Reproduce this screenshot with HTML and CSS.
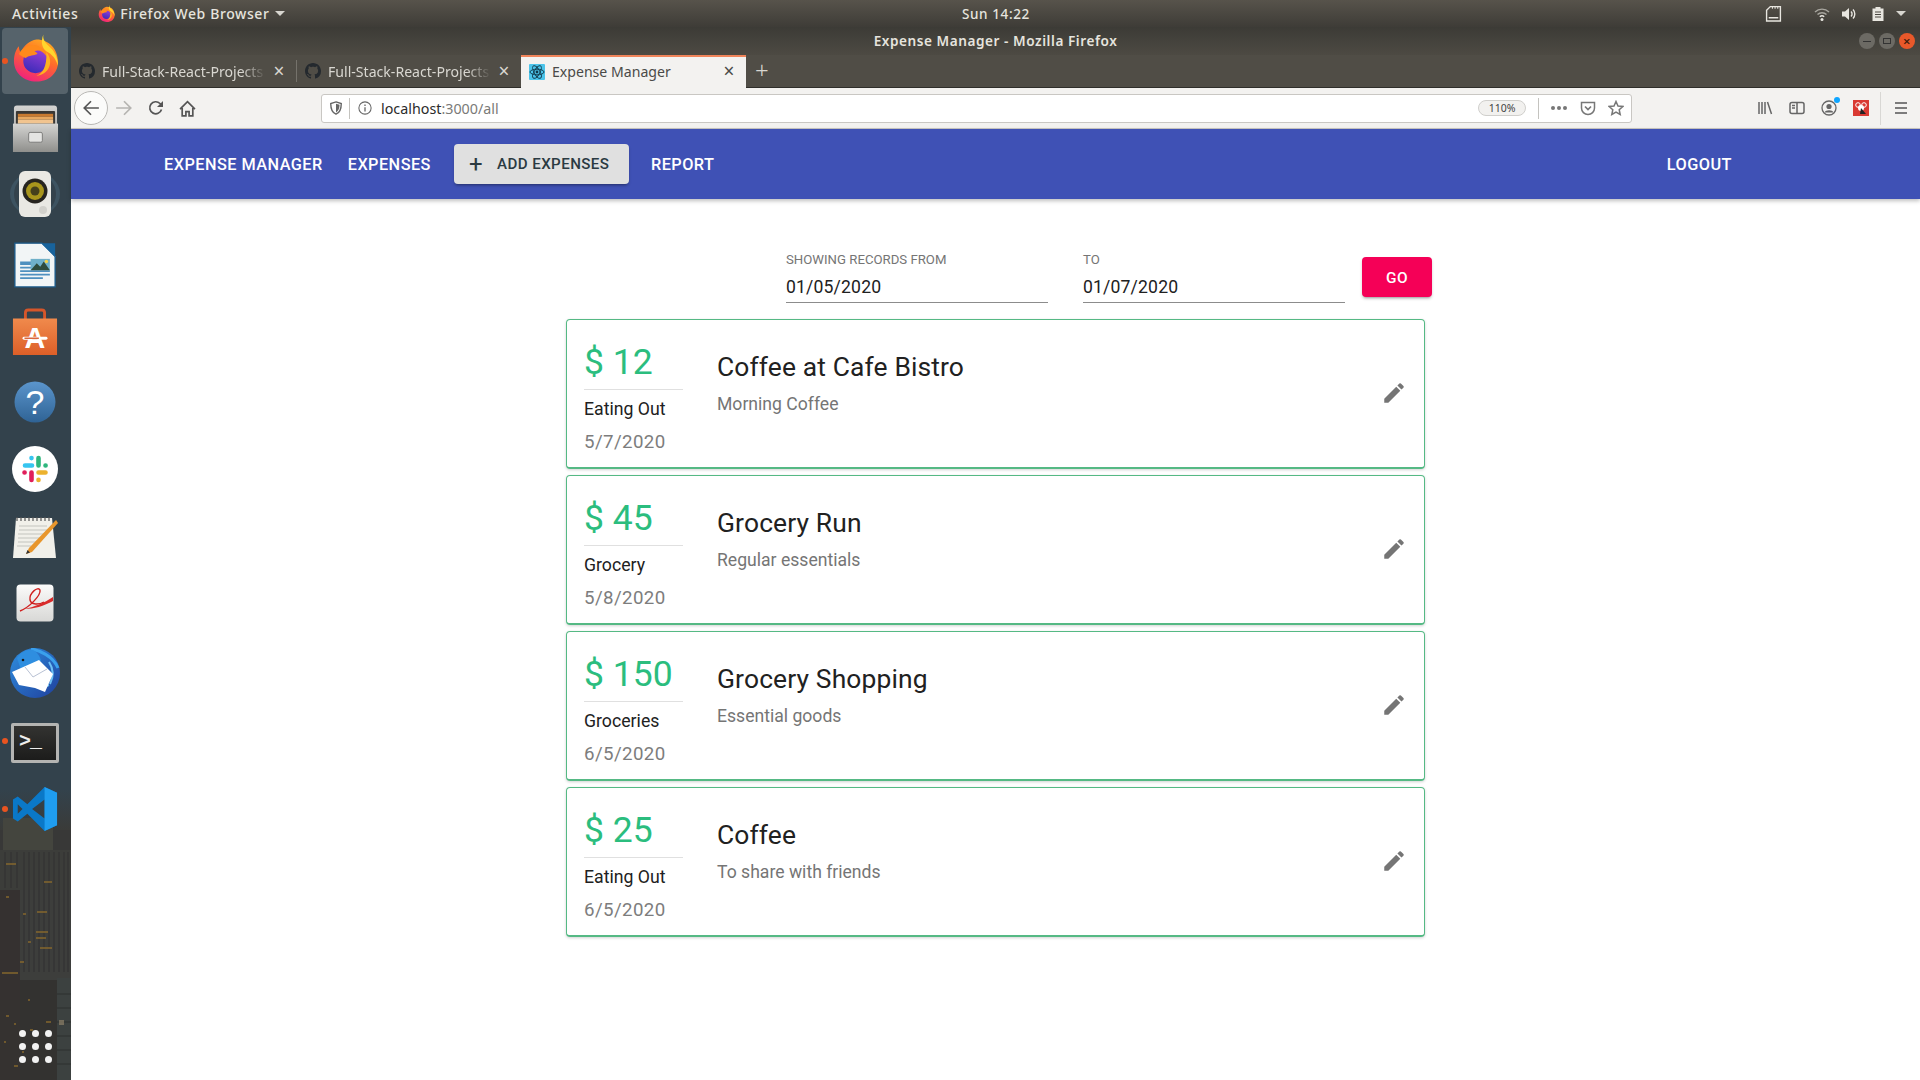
FILE: index.html
```html
<!DOCTYPE html>
<html lang="en">
<head>
    <meta charset="UTF-8">
    <title>Expense Manager - Mozilla Firefox</title>
    <link rel="stylesheet" href="styles.css">
</head>
<body>
<svg class="defs" width="0" height="0">
    <defs>
        <linearGradient id="foxBody" x1="0.8" y1="0" x2="0.3" y2="1">
            <stop offset="0" stop-color="#ffb01f"/><stop offset="0.45" stop-color="#ff6a2b"/><stop offset="1" stop-color="#f0207f"/>
        </linearGradient>
        <linearGradient id="foxGlobe" x1="0.7" y1="0" x2="0.3" y2="1">
            <stop offset="0" stop-color="#9a3fd8"/><stop offset="1" stop-color="#3b2bb8"/>
        </linearGradient>
        <linearGradient id="metal" x1="0" y1="0" x2="0" y2="1">
            <stop offset="0" stop-color="#d4d4d2"/><stop offset="1" stop-color="#8f8f8c"/>
        </linearGradient>
        <linearGradient id="shop" x1="0" y1="0" x2="0" y2="1">
            <stop offset="0" stop-color="#f08a4c"/><stop offset="1" stop-color="#dd5f28"/>
        </linearGradient>
        <linearGradient id="helpBall" x1="0" y1="0" x2="0" y2="1">
            <stop offset="0" stop-color="#5b95cc"/><stop offset="1" stop-color="#2f6395"/>
        </linearGradient>
        <linearGradient id="birdBlue" x1="0" y1="0" x2="1" y2="1">
            <stop offset="0" stop-color="#2f8fe0"/><stop offset="1" stop-color="#1f3f9c"/>
        </linearGradient>
        <linearGradient id="paper" x1="0" y1="0" x2="0" y2="1">
            <stop offset="0" stop-color="#fbfbfa"/><stop offset="1" stop-color="#d8d8d6"/>
        </linearGradient>
        <linearGradient id="cityFade" x1="0" y1="0" x2="0" y2="1">
            <stop offset="0" stop-color="#33424c"/><stop offset="1" stop-color="#3a3b39"/>
        </linearGradient>
        <symbol id="firefox" viewBox="0 0 48 48">
            <path d="M25 5C38 5 47 15 47 28C47 40 37 48 25 48C12 48 2 39 2 27C2 21 4 15 7 12C7 15 8 17 9 18C12 11 18 6 25 5Z" fill="url(#foxBody)"/>
            <path d="M32 0C31 7 36 10 41 15C46 21 47 27 47 32C45 25 41 20 35 17C31 14 29 8 32 0Z" fill="#ffd52e"/>
            <circle cx="24" cy="27" r="12.5" fill="url(#foxGlobe)"/>
            <path d="M7 20C11 13 17 10 24 11C30 12 35 17 35 22C32 17 27 15 23 17C25 18 26 19 26 20C22 22 18 21 14 24C11 23 9 22 7 20Z" fill="#ff8a1c"/>
            <path d="M35 18C39 22 40 28 38 33C36 39 30 42 25 42C31 40 36 33 35 18Z" fill="#ffb21f"/>
        </symbol>
        <symbol id="octocat" viewBox="0 0 16 16">
            <path d="M8 0C3.58 0 0 3.58 0 8c0 3.54 2.29 6.53 5.47 7.59.4.07.55-.17.55-.38 0-.19-.01-.82-.01-1.49-2.01.37-2.53-.49-2.69-.94-.09-.23-.48-.94-.82-1.13-.28-.15-.68-.52-.01-.53.63-.01 1.08.58 1.23.82.72 1.21 1.87.87 2.33.66.07-.52.28-.87.51-1.07-1.78-.2-3.64-.89-3.64-3.95 0-.87.31-1.59.82-2.15-.08-.2-.36-1.02.08-2.12 0 0 .67-.21 2.2.82.64-.18 1.32-.27 2-.27.68 0 1.36.09 2 .27 1.53-1.04 2.2-.82 2.2-.82.44 1.1.16 1.92.08 2.12.51.56.82 1.27.82 2.15 0 3.07-1.87 3.75-3.65 3.95.29.25.54.73.54 1.48 0 1.07-.01 1.93-.01 2.2 0 .21.15.46.55.38A8.013 8.013 0 0016 8c0-4.42-3.58-8-8-8z" fill="#24292e"/>
        </symbol>
        <symbol id="pencil" viewBox="0 0 24 24">
            <path d="M3 17.25V21h3.75L17.81 9.94l-3.75-3.75L3 17.25zM20.71 7.04a1 1 0 0 0 0-1.41l-2.34-2.34a1 1 0 0 0-1.41 0l-1.83 1.83 3.75 3.75 1.83-1.83z"/>
        </symbol>
    </defs>
</svg>

<div class="desktop">
    <header class="panel">
        <span class="panel-activities">Activities</span>
        <span class="panel-app">
            <svg class="panel-fox"><use href="#firefox"/></svg>
            Firefox Web Browser
            <span class="caret"></span>
        </span>
        <span class="panel-clock">Sun 14:22</span>
        <span class="panel-tray">
            <svg class="tray-sd" viewBox="0 0 16 16" width="17" height="17"><path d="M1.5 15V5L5 1.5h9.5V15ZM3.5 12h9" fill="none" stroke="#e8e6e0" stroke-width="1.3"/><path d="M7 1.5v2M9.5 1.5v2M12 1.5v2" stroke="#e8e6e0"/></svg>
            <svg class="tray-wifi" viewBox="0 0 16 16" width="16" height="16"><path d="M1 6a10 10 0 0 1 14 0M3.5 8.5a6.5 6.5 0 0 1 9 0" fill="none" stroke="#a8a69f" stroke-width="1.4"/><path d="M5.8 10.7a3.2 3.2 0 0 1 4.4 0" fill="none" stroke="#e8e6e0" stroke-width="1.4"/><circle cx="8" cy="13.5" r="1.5" fill="#e8e6e0"/></svg>
            <svg class="tray-vol" viewBox="0 0 16 16" width="16" height="16"><path d="M1 5.5h3L8 2v12L4 10.5H1Z" fill="#e8e6e0"/><path d="M10 5.5a3.5 3.5 0 0 1 0 5M12 3.5a6.5 6.5 0 0 1 0 9" fill="none" stroke="#e8e6e0" stroke-width="1.4"/></svg>
            <svg class="tray-bat" viewBox="0 0 16 16" width="16" height="16"><path d="M2.5 2.5h3V1h5v1.5h3V15h-11Z" fill="#e8e6e0"/><path d="M5 6h6M5 8.5h6M5 11h6" stroke="#4a4741" stroke-width="1"/></svg>
            <span class="caret caret-tray"></span>
        </span>
    </header>

    <div class="workspace">
        <aside class="dock">
            <svg class="dock-city" viewBox="0 0 71 290" preserveAspectRatio="none">
                <rect x="0" y="0" width="71" height="40" fill="url(#cityFade)"/>
                <rect x="0" y="40" width="71" height="250" fill="#383837"/>
                <rect x="3" y="28" width="50" height="32" fill="#44453e"/>
                <rect x="0" y="60" width="71" height="40" fill="#3c3d3a"/>
                <rect x="20" y="100" width="51" height="90" fill="#3d3e3c"/>
                <rect x="0" y="100" width="20" height="110" fill="#353130"/>
                <rect x="20" y="190" width="37" height="100" fill="#333230"/>
                <rect x="57" y="188" width="14" height="102" fill="#3c4140"/>
                <rect x="0" y="210" width="20" height="80" fill="#353230"/>
                <path d="M5 62v36M11 62v36M17 62v36M24 62v120M29 62v120M34 62v120M39 62v120M44 62v120M49 62v120M54 62v120M59 62v120M64 62v120M68 62v120" stroke="#343534" stroke-width="1.5"/>
                <path d="M57 204h14M57 218h14M57 232h14M57 246h14M57 260h14M57 274h14" stroke="#343837" stroke-width="2"/>
                <path d="M6 74h10M44 92h8M6 107h3M37 122h10M23 124h3M36 142h12M36 148h10M28 152h3M40 158h12M20 172h4M2 183h16M28 210h2M6 226h3M14 234h2M46 232h5M4 252h2M14 276h4M30 240h3M22 262h2" stroke="#8a6a2c" stroke-width="2" opacity="0.7"/>
                <rect x="59" y="230" width="5" height="5" fill="#8d8068" opacity="0.7"/>
            </svg>
            <div class="dock-item dock-item-active">
                <span class="run-dot"></span>
                <svg class="dock-icon nudge-up-3" width="47" height="48"><use href="#firefox"/></svg>
            </div>
            <div class="dock-item">
                <svg class="dock-icon nudge-up-1" viewBox="0 0 48 48" width="47" height="47">
                    <rect x="2" y="0.5" width="44" height="47" rx="3" fill="url(#metal)"/>
                    <rect x="4" y="6" width="40" height="15" rx="1" fill="#3a3835"/>
                    <rect x="6" y="9" width="36" height="3" fill="#c97a30"/>
                    <rect x="6" y="12" width="36" height="3" fill="#e8a860"/>
                    <rect x="6" y="15" width="36" height="4" fill="#f1c48f"/>
                    <rect x="1" y="19" width="46" height="29" fill="url(#metal)"/>
                    <rect x="17" y="28" width="14" height="10" rx="1.5" fill="#e4e4e2" stroke="#7c7c7a"/>
                </svg>
            </div>
            <div class="dock-item">
                <svg class="dock-icon nudge-up-3" viewBox="0 0 52 48" width="52" height="48">
                    <ellipse cx="26" cy="24" rx="25" ry="22" fill="#3d5361"/>
                    <ellipse cx="26" cy="24" rx="21" ry="21" fill="#33424c"/>
                    <rect x="10" y="1" width="32" height="46" rx="6" fill="#e9e8e3"/>
                    <circle cx="26" cy="21" r="12.5" fill="#26241f"/>
                    <circle cx="26" cy="21" r="9" fill="#a8951c"/>
                    <circle cx="26" cy="21" r="4.5" fill="#45401c"/>
                    <circle cx="34" cy="40" r="4" fill="#d2d1cc"/>
                </svg>
            </div>
            <div class="dock-item">
                <svg class="dock-icon" viewBox="0 0 48 52" width="42" height="52">
                    <path d="M1 1H32L47 16V51H1Z" fill="#f2f5f6" stroke="#1a5a8a" stroke-width="1.5"/>
                    <path d="M31 1H47V17Z" fill="#18639c"/>
                    <path d="M7 22h15v4H7zM7 28h15v2H7zM7 32h34v2H7zM7 36h34v2H7zM7 40h26v2H7z" fill="#4f90bf"/>
                    <rect x="19" y="19" width="22" height="13" fill="#6fb0c9"/>
                    <path d="M19 32l7-8 4 4 4-6 7 10Z" fill="#2f4c3c"/>
                    <circle cx="37" cy="22" r="2" fill="#f3d34a"/>
                </svg>
            </div>
            <div class="dock-item">
                <svg class="dock-icon nudge-up-1" viewBox="0 0 48 50" width="46" height="48">
                    <path d="M14 12V5q0-3 3-3h14q3 0 3 3v7" fill="none" stroke="#d6562a" stroke-width="3"/>
                    <path d="M1 11H47V49H1Z" fill="url(#shop)"/>
                    <text x="24" y="42" class="store-a">A</text>
                    <rect x="11" y="30" width="26" height="3" rx="1.5" fill="#fff"/>
                    <rect x="13" y="30.8" width="15" height="1.4" fill="#d6562a"/>
                </svg>
            </div>
            <div class="dock-item">
                <svg class="dock-icon nudge-down-1" viewBox="0 0 42 42" width="42" height="42">
                    <circle cx="21" cy="21" r="20.5" fill="url(#helpBall)"/>
                    <text x="21" y="33" class="help-mark">?</text>
                </svg>
            </div>
            <div class="dock-item">
                <svg class="dock-icon" viewBox="0 0 46 46" width="46" height="46">
                    <circle cx="23" cy="23" r="23" fill="#fff"/>
                    <path d="M13 19.5h7M19.5 12v.1" stroke="#36c5f0" stroke-width="4.6" stroke-linecap="round"/>
                    <path d="M26.5 12v7.5M33.5 19.5h.1" stroke="#2eb67d" stroke-width="4.6" stroke-linecap="round"/>
                    <path d="M26.5 26.5h7M26.5 34v-.1" stroke="#ecb22e" stroke-width="4.6" stroke-linecap="round"/>
                    <path d="M19.5 26.5V34M12.5 26.5h.1" stroke="#e01e5a" stroke-width="4.6" stroke-linecap="round"/>
                </svg>
            </div>
            <div class="dock-item">
                <svg class="dock-icon" viewBox="0 0 46 44" width="46" height="44">
                    <path d="M4 3H40L44 43H1Z" fill="#f1f0ea"/>
                    <path d="M5 2v4M9 2v4M13 2v4M17 2v4M21 2v4M25 2v4M29 2v4M33 2v4M37 2v4" stroke="#555" stroke-width="1.2"/>
                    <path d="M7 11h28M7 15h28M6 19h26M6 23h22M6 27h18M5 31h14" stroke="#c4c3bd" stroke-width="1.2"/>
                    <path d="M44 5L17 33L14 39L20 37L46 8Z" fill="#e8962c"/>
                    <path d="M14 39l1.5-4 2.5 2.5Z" fill="#333"/>
                </svg>
            </div>
            <div class="dock-item">
                <svg class="dock-icon nudge-up-2" viewBox="0 0 38 38" width="38" height="38">
                    <rect x="0.5" y="0.5" width="37" height="37" rx="4" fill="url(#paper)"/>
                    <path d="M8 25C18 23 28 19 37 13V17C28 22 18 25 8 25Z" fill="#d92b2b"/>
                    <path d="M4 27C14 23 25 11 24 6C22 2 13 9 14 16C15 21 23 21 28 18" fill="none" stroke="#d0201f" stroke-width="1.4"/>
                </svg>
            </div>
            <div class="dock-item">
                <svg class="dock-icon" viewBox="0 0 52 50" width="52" height="50">
                    <circle cx="26" cy="25" r="25" fill="url(#birdBlue)"/>
                    <path d="M22 1C30 2 44 8 49 20" fill="none" stroke="#3aa0ec" stroke-width="3"/>
                    <path d="M40 14C44 20 45 28 41 36M32 40L40 37" fill="none" stroke="#6cc0f4" stroke-width="2"/>
                    <path d="M8 10C12 4 18 1 24 2C28 4 31 8 32 13L12 22Z" fill="#2e8ee0"/>
                    <path d="M3 24L30 12L44 26L36 44L26 40L10 37Z" fill="#fff"/>
                    <path d="M16 19L24 29L38 21" fill="none" stroke="#b9c2d4" stroke-width="1"/>
                    <circle cx="14" cy="12" r="1.3" fill="#1a1a1a"/>
                </svg>
            </div>
            <div class="dock-item">
                <span class="run-dot"></span>
                <div class="term-icon nudge-down-2"><span class="term-prompt">&gt;_</span></div>
            </div>
            <div class="dock-item">
                <span class="run-dot"></span>
                <svg class="dock-icon" viewBox="0 0 48 48" width="46" height="46">
                    <path fill-rule="evenodd" d="M34 1L16 19L6 11L1 14V34L6 37L16 29L34 47L47 41V7ZM34 14L21 24L34 34ZM6 19L11 24L6 29Z" fill="#0a78c8"/>
                    <path d="M34 1L47 7V41L34 47V34V14Z" fill="#1f9df0"/>
                </svg>
            </div>
            <div class="dock-grid">
                <span></span><span></span><span></span>
                <span></span><span></span><span></span>
                <span></span><span></span><span></span>
            </div>
        </aside>

        <div class="window">
            <div class="titlebar">
                <span class="titlebar-text">Expense Manager - Mozilla Firefox</span>
                <span class="win-buttons">
                    <span class="win-btn"><i class="win-min"></i></span>
                    <span class="win-btn"><i class="win-max"></i></span>
                    <span class="win-btn win-close">&#215;</span>
                </span>
            </div>

            <div class="tabstrip">
                <div class="tab">
                    <svg class="tab-icon"><use href="#octocat"/></svg>
                    <span class="tab-label tab-label-fade">Full-Stack-React-Projects</span>
                    <span class="tab-close">&#215;</span>
                </div>
                <div class="tab tab-second">
                    <svg class="tab-icon"><use href="#octocat"/></svg>
                    <span class="tab-label tab-label-fade">Full-Stack-React-Projects</span>
                    <span class="tab-close">&#215;</span>
                </div>
                <div class="tab tab-active">
                    <svg class="tab-icon" viewBox="0 0 16 16">
                        <rect width="16" height="16" rx="1" fill="#4cc4ea"/>
                        <g fill="none" stroke="#10384a" stroke-width="0.9">
                            <ellipse cx="8" cy="8" rx="7" ry="2.8"/>
                            <ellipse cx="8" cy="8" rx="7" ry="2.8" transform="rotate(60 8 8)"/>
                            <ellipse cx="8" cy="8" rx="7" ry="2.8" transform="rotate(120 8 8)"/>
                        </g>
                        <circle cx="8" cy="8" r="1.4" fill="#10384a"/>
                    </svg>
                    <span class="tab-label">Expense Manager</span>
                    <span class="tab-close">&#215;</span>
                </div>
                <span class="tab-new">+</span>
            </div>

            <div class="toolbar">
                <span class="back-btn">
                    <svg viewBox="0 0 16 16" width="18" height="18"><path d="M15 8H2M8 2L2 8l6 6" fill="none" stroke="#555" stroke-width="1.5"/></svg>
                </span>
                <svg class="nav-forward" viewBox="0 0 16 16" width="18" height="18"><path d="M1 8h13M8 2l6 6-6 6" fill="none" stroke="#b5b4b1" stroke-width="1.5"/></svg>
                <svg class="nav-reload" viewBox="0 0 16 16" width="16" height="16"><path d="M13.5 9.5A6 6 0 1 1 12 3.5L14 5.5" fill="none" stroke="#555" stroke-width="1.7"/><path d="M15 1v6H9Z" fill="#555"/></svg>
                <svg class="nav-home" viewBox="0 0 16 16" width="17" height="17"><path d="M1 8.5L8 1.5l7 7M3 7.5V15h3.5v-4h3v4H13V7.5" fill="none" stroke="#555" stroke-width="1.6"/></svg>

                <div class="urlbar">
                    <svg viewBox="0 0 16 16" width="14" height="14"><path d="M8 1l6 2c0 6-1 10-6 12C3 13 2 9 2 3Z" fill="none" stroke="#666" stroke-width="1.6"/><path d="M8 3l4 1.4c0 4-1 7-4 8.6Z" fill="#666"/></svg>
                    <span class="urlbar-sep"></span>
                    <svg viewBox="0 0 16 16" width="14" height="14"><circle cx="8" cy="8" r="7" fill="none" stroke="#666" stroke-width="1.2"/><path d="M8 7v5M8 4v1.6" stroke="#666" stroke-width="1.5"/></svg>
                    <span class="url-text">localhost<span class="url-dim">:3000/all</span></span>
                    <span class="zoom-pill">110%</span>
                    <span class="urlbar-sep urlbar-sep-right"></span>
                    <span class="url-dots"><i></i><i></i><i></i></span>
                    <svg class="url-pocket" viewBox="0 0 16 16" width="16" height="16"><path d="M1.5 2.5h13V8a6.5 6.5 0 0 1-13 0Z" fill="none" stroke="#777" stroke-width="1.5"/><path d="M5 6.5l3 3 3-3" fill="none" stroke="#777" stroke-width="1.7"/></svg>
                    <svg class="url-star" viewBox="0 0 16 16" width="16" height="16"><path d="M8 1.5l2 4.5 4.8.5-3.6 3.2 1 4.8L8 12.2l-4.2 2.3 1-4.8L1.2 6.5 6 6Z" fill="none" stroke="#777" stroke-width="1.5"/></svg>
                </div>

                <div class="tool-right">
                    <svg viewBox="0 0 16 16" width="16" height="16"><path d="M2 2v12M5 2v12M8 2v12M10.5 2l4 12" stroke="#666" stroke-width="1.5"/></svg>
                    <svg viewBox="0 0 16 16" width="16" height="16"><rect x="1" y="2.5" width="14" height="11" rx="2" fill="none" stroke="#666" stroke-width="1.5"/><path d="M8 2.5v11M3 5.5h3M3 8h3" stroke="#666" stroke-width="1.5"/></svg>
                    <span class="account-icon">
                        <svg viewBox="0 0 16 16" width="16" height="16"><circle cx="8" cy="8" r="7" fill="none" stroke="#666" stroke-width="1.3"/><circle cx="8" cy="6.5" r="2.6" fill="#666"/><path d="M3.5 12.5c1-3 8-3 9 0" fill="#666"/></svg>
                        <i class="account-dot"></i>
                    </span>
                    <svg viewBox="0 0 16 16" width="16" height="16"><rect width="16" height="16" fill="#d93a32"/><circle cx="5" cy="5" r="2.3" fill="none" stroke="#fff"/><circle cx="11" cy="5" r="2.3" fill="none" stroke="#fff"/><circle cx="8" cy="8" r="3" fill="#fff"/><path d="M8 8l5 6H7Z" fill="#222"/></svg>
                    <span class="tool-sep"></span>
                    <svg viewBox="0 0 16 16" width="16" height="16"><path d="M2 3h12M2 8h12M2 13h12" stroke="#555" stroke-width="1.7"/></svg>
                </div>
            </div>

            <nav class="appbar">
                <a class="nav-link nav-brand">Expense Manager</a>
                <a class="nav-link">Expenses</a>
                <a class="add-btn"><span class="add-plus">+</span>Add Expenses</a>
                <a class="nav-link">Report</a>
                <a class="nav-link nav-logout">Logout</a>
            </nav>

            <main class="content">
                <form class="filter">
                    <label class="field">
                        <span class="field-label">Showing records from</span>
                        <span class="field-value">01/05/2020</span>
                    </label>
                    <label class="field">
                        <span class="field-label">To</span>
                        <span class="field-value">01/07/2020</span>
                    </label>
                    <button type="button" class="go-btn">Go</button>
                </form>

                <section class="expense">
                    <div class="expense-side">
                        <div class="expense-amount">$ 12</div>
                        <div class="expense-cat">Eating Out</div>
                        <div class="expense-date">5/7/2020</div>
                    </div>
                    <div class="expense-main">
                        <div class="expense-title">Coffee at Cafe Bistro</div>
                        <div class="expense-note">Morning Coffee</div>
                    </div>
                    <svg class="edit-icon"><use href="#pencil"/></svg>
                </section>

                <section class="expense">
                    <div class="expense-side">
                        <div class="expense-amount">$ 45</div>
                        <div class="expense-cat">Grocery</div>
                        <div class="expense-date">5/8/2020</div>
                    </div>
                    <div class="expense-main">
                        <div class="expense-title">Grocery Run</div>
                        <div class="expense-note">Regular essentials</div>
                    </div>
                    <svg class="edit-icon"><use href="#pencil"/></svg>
                </section>

                <section class="expense">
                    <div class="expense-side">
                        <div class="expense-amount">$ 150</div>
                        <div class="expense-cat">Groceries</div>
                        <div class="expense-date">6/5/2020</div>
                    </div>
                    <div class="expense-main">
                        <div class="expense-title">Grocery Shopping</div>
                        <div class="expense-note">Essential goods</div>
                    </div>
                    <svg class="edit-icon"><use href="#pencil"/></svg>
                </section>

                <section class="expense">
                    <div class="expense-side">
                        <div class="expense-amount">$ 25</div>
                        <div class="expense-cat">Eating Out</div>
                        <div class="expense-date">6/5/2020</div>
                    </div>
                    <div class="expense-main">
                        <div class="expense-title">Coffee</div>
                        <div class="expense-note">To share with friends</div>
                    </div>
                    <svg class="edit-icon"><use href="#pencil"/></svg>
                </section>
            </main>
        </div>
    </div>
</div>
</body>
</html>
```

FILE: styles.css
```css
* {
    box-sizing: border-box;
}

html, body {
    margin: 0;
    height: 100%;
    overflow: hidden;
}

body {
    font-family: Roboto, "Liberation Sans", sans-serif;
    background: #fff;
}

.defs {
    position: absolute;
}

.desktop {
    display: flex;
    flex-direction: column;
    height: 1080px;
}

/* ubuntu top panel */
.panel {
    display: flex;
    align-items: center;
    height: 27px;
    padding-left: 12px;
    background: linear-gradient(#57534b, #3e3c37);
    color: #e6e4de;
    font-family: "Noto Sans", sans-serif;
    font-size: 14px;
    font-weight: 500;
    letter-spacing: 0.6px;
    position: relative;
}

.panel-app {
    display: flex;
    align-items: center;
    margin-left: 20px;
}

.panel-fox {
    width: 17px;
    height: 17px;
    margin-right: 5px;
}

.caret {
    display: inline-block;
    width: 0;
    height: 0;
    margin-left: 6px;
    border-left: 5px solid transparent;
    border-right: 5px solid transparent;
    border-top: 5px solid #d8d6d0;
}

.panel-clock {
    position: absolute;
    left: 962px;
    font-size: 13.5px;
}

.panel-tray {
    display: flex;
    align-items: center;
    margin-left: auto;
    padding-right: 14px;
}

.tray-wifi {
    margin-left: 32px;
}

.tray-vol {
    margin-left: 11px;
}

.tray-bat {
    margin-left: 13px;
}

.caret-tray {
    margin-left: 10px;
}

.workspace {
    flex: 1;
    display: flex;
    min-height: 0;
}

/* launcher */
.dock {
    position: relative;
    width: 71px;
    flex: none;
    display: flex;
    flex-direction: column;
    background: #33424c;
}

.dock-city {
    position: absolute;
    left: 0;
    bottom: 0;
    width: 71px;
    height: 290px;
}

.dock-item {
    position: relative;
    height: 68px;
    flex: none;
    display: flex;
    align-items: center;
    justify-content: center;
    padding-right: 1px;
}

.dock-item-active::before {
    content: "";
    position: absolute;
    left: 2px;
    top: 1px;
    width: 66px;
    height: 66px;
    border-radius: 4px;
    background: #56636b;
}

.dock-icon {
    position: relative;
}

.nudge-up-1 {
    margin-bottom: 2px;
}

.nudge-up-2 {
    margin-bottom: 4px;
}

.nudge-up-3 {
    margin-bottom: 6px;
}

.nudge-down-1 {
    margin-top: 2px;
}

.nudge-down-2 {
    margin-top: 4px;
}

.run-dot {
    position: absolute;
    left: 2px;
    top: 31px;
    width: 6px;
    height: 6px;
    border-radius: 50%;
    background: #e95420;
    z-index: 1;
}

.term-icon {
    position: relative;
    width: 48px;
    height: 40px;
    padding: 2px 0 0 5px;
    background: linear-gradient(#333331, #1c1c1b);
    border: 3px solid #b4b4b2;
    border-radius: 2px;
    line-height: 28px;
}

.term-prompt {
    color: #eee;
    font-family: "Liberation Mono", monospace;
    font-size: 20px;
    font-weight: 700;
    letter-spacing: -1px;
}

.store-a {
    fill: #fff;
    font-family: "Liberation Sans", sans-serif;
    font-size: 30px;
    font-weight: 700;
    text-anchor: middle;
}

.help-mark {
    fill: #fff;
    font-family: "Liberation Sans", sans-serif;
    font-size: 34px;
    text-anchor: middle;
}

.dock-grid {
    position: relative;
    display: grid;
    grid-template-columns: repeat(3, 7px);
    gap: 6px;
    justify-content: center;
    margin-top: auto;
    padding-right: 1px;
    padding-bottom: 17px;
}

.dock-grid span {
    width: 7px;
    height: 7px;
    border-radius: 50%;
    background: #f2f2f2;
}

.window {
    flex: 1;
    min-width: 0;
    display: flex;
    flex-direction: column;
}

.titlebar {
    position: relative;
    height: 28px;
    flex: none;
    display: flex;
    align-items: center;
    justify-content: center;
    padding-bottom: 1px;
    background: linear-gradient(#3c3b36, #4d4a43);
    color: #e6e4de;
    font-family: "Noto Sans", sans-serif;
    font-size: 13.6px;
    font-weight: 600;
    letter-spacing: 0.55px;
}

.win-buttons {
    position: absolute;
    right: 5px;
    top: 6px;
    display: flex;
    gap: 4px;
}

.win-btn {
    width: 16px;
    height: 16px;
    border-radius: 50%;
    background: #6c6a64;
    display: flex;
    align-items: center;
    justify-content: center;
    color: #3b1a0c;
    font-size: 13px;
    line-height: 1;
}

.win-close {
    background: #e8582a;
}

.win-min {
    width: 8px;
    height: 1px;
    background: #333;
}

.win-max {
    width: 8px;
    height: 6px;
    border: 1px solid #333;
}

/* firefox tabs */
.tabstrip {
    height: 33px;
    flex: none;
    display: flex;
    align-items: stretch;
    background: #504d46;
    border-bottom: 1px solid #2f2e2a;
    font-family: "Noto Sans", sans-serif;
    font-size: 14.1px;
    color: #d9d7d1;
}

.tab {
    width: 225px;
    flex: none;
    display: flex;
    align-items: center;
    padding: 0 10px 0 8px;
}

.tab-second {
    border-left: 1px solid #75726b;
    margin: 5px 0;
}

.tab-icon {
    width: 16px;
    height: 16px;
    flex: none;
    margin-right: 7px;
}

.tab-label {
    flex: 1;
    min-width: 0;
    white-space: nowrap;
    overflow: hidden;
}

.tab-label-fade {
    -webkit-mask-image: linear-gradient(to right, #000 85%, transparent);
    mask-image: linear-gradient(to right, #000 85%, transparent);
}

.tab-close {
    width: 14px;
    margin-left: 6px;
    text-align: center;
    font-size: 19px;
    line-height: 1;
}

.tab-active {
    background: #f3f2f0;
    color: #4a4a48;
    border-top: 2px solid #f0845a;
    margin-bottom: -1px;
    padding-bottom: 2px;
}

.tab-new {
    margin-left: 9px;
    font-size: 24px;
    font-weight: 300;
    line-height: 30px;
    color: #d9d7d1;
}

/* firefox toolbar */
.toolbar {
    height: 41px;
    flex: none;
    display: flex;
    align-items: center;
    padding: 0 0 0 3px;
    background: #f3f2f0;
    border-bottom: 1px solid #c8c6c2;
}

.back-btn {
    width: 34px;
    height: 34px;
    flex: none;
    display: flex;
    align-items: center;
    justify-content: center;
    border: 1px solid #b9b8b5;
    border-radius: 50%;
    background: #fbfbfa;
}

.nav-forward {
    flex: none;
    margin-left: 7px;
}

.nav-reload {
    flex: none;
    margin-left: 15px;
}

.nav-home {
    flex: none;
    margin-left: 15px;
}

.urlbar {
    width: 1311px;
    height: 29px;
    flex: none;
    display: flex;
    align-items: center;
    margin-left: 125px;
    padding: 0 7px;
    background: #fff;
    border: 1px solid #c9c7c3;
    border-radius: 3px;
    font-family: "Noto Sans", sans-serif;
    font-size: 14.3px;
}

.urlbar-sep {
    width: 1px;
    height: 21px;
    margin: 0 8px 0 6px;
    background: #c4c3bf;
}

.url-text {
    flex: 1;
    margin-left: 9px;
    color: #2b2b2b;
}

.url-dim {
    color: #7a7a78;
}

.zoom-pill {
    width: 48px;
    height: 16px;
    border: 1px solid #d0cfcc;
    border-radius: 8px;
    background: #f2f1ef;
    color: #444;
    font-size: 10.5px;
    line-height: 14px;
    text-align: center;
}

.urlbar-sep-right {
    margin: 0 0 0 12px;
}

.url-dots {
    display: flex;
    gap: 2px;
    margin-left: 12px;
}

.url-dots i {
    width: 4px;
    height: 4px;
    border-radius: 50%;
    background: #777;
}

.url-pocket {
    margin-left: 13px;
}

.url-star {
    margin-left: 12px;
}

.tool-right {
    display: flex;
    align-items: center;
    margin-left: 125px;
    gap: 16px;
}

.account-icon {
    position: relative;
    height: 16px;
}

.account-dot {
    position: absolute;
    right: -3px;
    top: -3px;
    width: 6px;
    height: 6px;
    border-radius: 50%;
    background: #0ea5ff;
}

.tool-sep {
    width: 1px;
    height: 33px;
    margin: 0 -4px 0 -5px;
    background: #d8d7d4;
}

/* the page itself */
.appbar {
    height: 70px;
    flex: none;
    display: flex;
    align-items: center;
    gap: 23px;
    padding: 0 188px 0 93px;
    background: #3f51b5;
    box-shadow: 0 2px 4px rgba(0, 0, 0, 0.25);
    position: relative;
}

.nav-link {
    color: #fff;
    font-size: 16.3px;
    font-weight: 500;
    letter-spacing: 0.46px;
    text-transform: uppercase;
}

.nav-brand {
    margin-right: 2px;
}

.nav-logout {
    margin-left: auto;
}

.add-btn {
    display: flex;
    align-items: center;
    width: 175px;
    height: 40px;
    margin-right: -1px;
    padding-left: 15px;
    background: #e0e0e0;
    color: #2b3a42;
    border-radius: 4px;
    box-shadow: 0 3px 2px -2px rgba(0, 0, 0, 0.2), 0 2px 3px rgba(0, 0, 0, 0.18);
    font-size: 15.1px;
    font-weight: 500;
    letter-spacing: 0.44px;
    text-transform: uppercase;
}

.add-plus {
    width: 28px;
    font-size: 24px;
    font-weight: 400;
    line-height: 1;
}

.content {
    flex: 1;
    width: 859px;
    margin: 0 auto;
}

.filter {
    display: flex;
    align-items: flex-start;
    justify-content: flex-end;
    margin-right: -7px;
    padding-top: 50px;
    height: 120px;
}

.field {
    display: flex;
    flex-direction: column;
    width: 262px;
    height: 54px;
    margin-right: 35px;
    border-bottom: 1px solid #8c8c8c;
}

.field + .field {
    margin-right: 17px;
}

.field-label {
    height: 20px;
    padding-top: 3px;
    color: #757575;
    font-size: 13.2px;
    line-height: 16px;
    text-transform: uppercase;
}

.field-value {
    padding-top: 6px;
    color: #212121;
    font-size: 17.6px;
    line-height: 24px;
    letter-spacing: 0.16px;
}

.go-btn {
    width: 70px;
    height: 40px;
    margin-top: 8px;
    padding: 1px 0 0;
    border: 0;
    border-radius: 4px;
    background: #f50057;
    color: #fff;
    font-family: inherit;
    font-size: 15.4px;
    font-weight: 500;
    letter-spacing: 0.44px;
    text-transform: uppercase;
    box-shadow: 0 3px 2px -2px rgba(0, 0, 0, 0.2), 0 2px 3px rgba(0, 0, 0, 0.18);
}

.expense {
    display: flex;
    align-items: flex-start;
    height: 150px;
    margin-bottom: 6px;
    padding: 0 17px 0 17px;
    border: 1px solid #55b984;
    border-bottom-width: 2px;
    border-radius: 4px;
    box-shadow: 0 1px 3px rgba(0, 0, 0, 0.18);
}

.expense-side {
    width: 99px;
    flex: none;
    padding-top: 21px;
}

.expense-amount {
    height: 49px;
    color: #2bbd7e;
    font-size: 35.5px;
    line-height: 42px;
    border-bottom: 1px solid #e0e0e0;
    white-space: nowrap;
}

.expense-cat {
    margin-top: 6px;
    color: #212121;
    font-size: 17.7px;
    line-height: 26px;
}

.expense-date {
    margin-top: 7px;
    color: #7d7d7d;
    font-size: 18.7px;
    line-height: 26px;
    letter-spacing: 0.4px;
}

.expense-main {
    flex: 1;
    padding: 29px 0 0 34px;
}

.expense-title {
    color: #212121;
    font-size: 26.4px;
    line-height: 36px;
    letter-spacing: 0.14px;
}

.expense-note {
    margin-top: 6px;
    color: #757575;
    font-size: 17.6px;
    line-height: 26px;
}

.edit-icon {
    flex: none;
    align-self: center;
    width: 26px;
    height: 26px;
    margin-bottom: 1px;
    fill: #757575;
}
```
